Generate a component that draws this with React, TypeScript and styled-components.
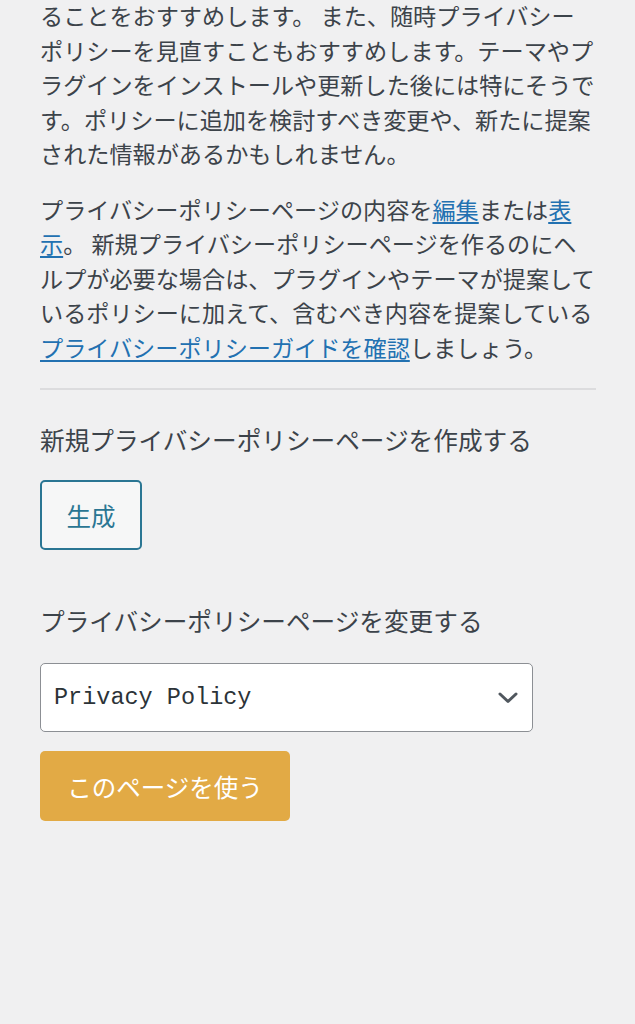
import React from "react";
import styled, { createGlobalStyle } from "styled-components";

const Global = createGlobalStyle`
  html, body { margin: 0; padding: 0; background: #f0f0f1; }
  body {
    font-family: "Noto Sans CJK JP", "Noto Sans", sans-serif;
    color: #3c434a;
  }
`;

const Page = styled.div`
  width: 635px;
  min-height: 1024px;
  box-sizing: border-box;
  padding: 0 39px 0 40px;
  margin-top: -2px;
  background: #f0f0f1;
`;

const Para = styled.p`
  margin: 0 0 21px;
  font-size: 23.15px;
  line-height: 34.5px;
`;

const Link = styled.a`
  color: #2271b1;
  text-decoration: underline;
  text-underline-offset: 3px;
  text-decoration-thickness: 1.5px;
`;

const Rule = styled.hr`
  border: 0;
  border-top: 2px solid #dcdcde;
  margin: 24px 0 0;
`;

const Section = styled.section<{ $top: number }>`
  margin-top: ${(p) => p.$top}px;
  display: flex;
  flex-direction: column;
  align-items: flex-start;
`;

const Label = styled.div<{ $gap: number }>`
  font-size: 24.65px;
  line-height: 36px;
  margin-bottom: ${(p) => p.$gap}px;
`;

const SecondaryButton = styled.button`
  box-sizing: border-box;
  height: 70px;
  width: 102px;
  padding: 0;
  font-family: "Noto Sans CJK JP", sans-serif;
  font-size: 24.5px;
  color: #2a7693;
  background: #f6f7f7;
  border: 2px solid #2a7693;
  border-radius: 5px;
`;

const SelectBox = styled.div`
  box-sizing: border-box;
  width: 493px;
  height: 69px;
  background: #fff;
  border: 1.5px solid #8c8f94;
  border-radius: 5px;
  display: flex;
  align-items: center;
  justify-content: space-between;
  padding: 0 14px 0 13px;
  margin-bottom: 19px;
`;

const SelectText = styled.span`
  font-family: "Liberation Mono", "DejaVu Sans Mono", monospace;
  font-size: 23.5px;
  color: #2c3338;
`;

const PrimaryButton = styled.button`
  box-sizing: border-box;
  height: 70px;
  width: 250px;
  padding: 0;
  font-family: "Noto Sans CJK JP", sans-serif;
  font-size: 24.5px;
  color: #fff;
  background: #e2aa45;
  border: 0;
  border-radius: 5px;
`;

const Chevron = () => (
  <svg width="20" height="12" viewBox="0 0 20 12" aria-hidden>
    <path d="M2 2 L10 9.5 L18 2" fill="none" stroke="#50575e" strokeWidth="3" strokeLinecap="round" strokeLinejoin="round" />
  </svg>
);

export default function App() {
  return (
    <>
      <Global />
      <Page>
        <Para>
          ることをおすすめします。 また、随時プライバシーポリシーを見直すこともおすすめします。テーマやプラグインをインストールや更新した後には特にそうです。ポリシーに追加を検討すべき変更や、新たに提案された情報があるかもしれません。
        </Para>
        <Para>
          プライバシーポリシーページの内容を<Link href="#">編集</Link>または<Link href="#">表示</Link>。 新規プライバシーポリシーページを作るのにヘルプが必要な場合は、プラグインやテーマが提案しているポリシーに加えて、含むべき内容を提案している<Link href="#">プライバシーポリシーガイドを確認</Link>しましょう。
        </Para>
        <Rule />
        <Section $top={31}>
          <Label $gap={23}>新規プライバシーポリシーページを作成する</Label>
          <SecondaryButton>生成</SecondaryButton>
        </Section>
        <Section $top={52}>
          <Label $gap={25}>プライバシーポリシーページを変更する</Label>
          <SelectBox>
            <SelectText>Privacy Policy</SelectText>
            <Chevron />
          </SelectBox>
          <PrimaryButton>このページを使う</PrimaryButton>
        </Section>
      </Page>
    </>
  );
}
